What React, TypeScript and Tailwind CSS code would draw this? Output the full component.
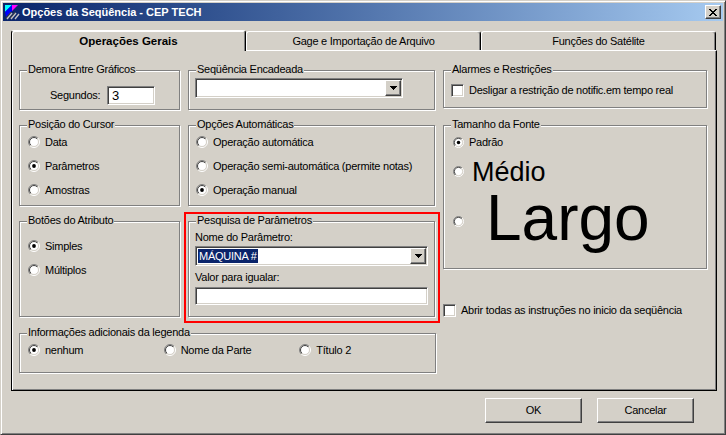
import { ReactNode } from "react";

const sunken =
  "bg-white border border-t-[#808080] border-l-[#808080] border-b-white border-r-white shadow-[inset_1px_1px_0_#404040,inset_-1px_-1px_0_#d4d0c8]";
const raised =
  "bg-[#d4d0c8] border border-t-white border-l-white border-b-[#404040] border-r-[#404040] shadow-[inset_-1px_-1px_0_#808080,inset_1px_1px_0_#d4d0c8]";

function Radio({ checked, size = 12 }: { checked?: boolean; size?: number }) {
  return (
    <svg width={size} height={size} viewBox="0 0 12 12" className="shrink-0">
      <defs>
        <linearGradient id="radio-out" x1="0" y1="0" x2="1" y2="1">
          <stop offset="0.5" stopColor="#808080" />
          <stop offset="0.5" stopColor="#ffffff" />
        </linearGradient>
        <linearGradient id="radio-in" x1="0" y1="0" x2="1" y2="1">
          <stop offset="0.5" stopColor="#404040" />
          <stop offset="0.5" stopColor="#d4d0c8" />
        </linearGradient>
      </defs>
      <circle cx="6" cy="6" r="5.5" fill="none" stroke="url(#radio-out)" />
      <circle cx="6" cy="6" r="4.5" fill="#fff" stroke="url(#radio-in)" />
      {checked && <circle cx="6" cy="6" r="1.9" fill="#000" />}
    </svg>
  );
}

function Check() {
  return <div className={`${sunken} w-[13px] h-[13px] shrink-0`} />;
}

function Arrow() {
  return (
    <svg width="7" height="4" viewBox="0 0 7 4">
      <path d="M0 0h7v1h-1v1h-1v1h-1v1h-1v-1h-1v-1h-1v-1h-1z" fill="#000" />
    </svg>
  );
}

function Combo({ className, value }: { className?: string; value?: string }) {
  return (
    <div className={`${sunken} flex items-center p-[1px] ${className ?? ""}`}>
      <div className="flex-1 flex items-center pl-[1px]">
        {value && (
          <span className="bg-[#0a246a] text-white leading-[14px] px-[1px]">{value}</span>
        )}
      </div>
      <div className={`${raised} w-[16px] h-[16px] flex items-center justify-center`}>
        <Arrow />
      </div>
    </div>
  );
}

function Group({
  label,
  className,
  children,
}: {
  label: string;
  className?: string;
  children?: ReactNode;
}) {
  return (
    <div
      className={`relative border border-[#808080] shadow-[inset_1px_1px_0_#fff,1px_1px_0_#fff] ${className ?? ""}`}
    >
      <span className="absolute -top-[8px] left-[7px] bg-[#d4d0c8] px-[1px] leading-[13px] whitespace-nowrap">
        {label}
      </span>
      {children}
    </div>
  );
}

function Option({
  label,
  checked,
  className,
}: {
  label: string;
  checked?: boolean;
  className?: string;
}) {
  return (
    <div className={`flex items-center h-[24px] gap-[5px] whitespace-nowrap ${className ?? ""}`}>
      <Radio checked={checked} />
      <span>{label}</span>
    </div>
  );
}

function AppIcon() {
  return (
    <svg width="16" height="16" viewBox="0 0 16 16" className="shrink-0">
      <path d="M1 1h7L1 8z" fill="#00ffff" />
      <path d="M8 1h6L8 7z" fill="#ff00ff" />
      <path d="M1 8l7-7v6L2 13z" fill="#0000ff" />
      <path d="M3 15l5-6M7 15l5-6M11 15l4-5" stroke="#c0c0c0" strokeWidth="1.4" />
      <path d="M2 14l5-6M6 14l5-6" stroke="#404040" strokeWidth="1" />
    </svg>
  );
}

function CloseButton() {
  return (
    <div className={`${raised} w-[16px] h-[14px] flex items-center justify-center`}>
      <svg width="8" height="7" viewBox="0 0 8 7">
        <path
          d="M0 0h2v1h1v1h2v-1h1v-1h2v1h-1v1h-1v1h-1v1h1v1h1v1h1v1h-2v-1h-1v-1h-2v1h-1v1h-2v-1h1v-1h1v-1h1v-1h-1v-1h-1v-1h-1z"
          fill="#000"
        />
      </svg>
    </div>
  );
}

function Tab({ label, active }: { label: string; active?: boolean }) {
  if (active) {
    return (
      <div className="relative z-10 w-[235px] h-[21px] -mb-[1px] bg-[#d4d0c8] rounded-tl-[3px] rounded-tr-[3px] border-l border-l-black border-t border-t-white border-r border-r-black shadow-[inset_1px_1px_0_#fff,inset_-1px_0_0_#808080] flex items-center justify-center pt-[1px] font-bold text-[11.5px] tracking-[0px]">
        {label}
      </div>
    );
  }
  return (
    <div className="w-[235px] h-[19px] bg-[#d4d0c8] rounded-tl-[3px] rounded-tr-[3px] border-l border-l-white border-t border-t-white border-r border-r-black shadow-[inset_-1px_0_0_#808080] flex items-center justify-center">
      {label}
    </div>
  );
}

function Button({ label }: { label: string }) {
  return (
    <div className={`${raised} w-[97px] h-[25px] flex items-center justify-center`}>
      {label}
    </div>
  );
}

export default function App() {
  return (
    <div className="font-['Liberation_Sans',Arial,sans-serif] text-[11px] tracking-[-0.25px] text-black w-[726px] h-[435px] bg-[#d4d0c8] border border-t-[#d4d0c8] border-l-[#d4d0c8] border-b-[#404040] border-r-[#404040] shadow-[inset_1px_1px_0_#fff,inset_-1px_-1px_0_#808080] p-[2px] flex flex-col">
      {/* title bar */}
      <div className="h-[18px] flex items-center bg-linear-to-r from-[#0a246a] to-[#a6caf0] pl-[1px] pr-[2px]">
        <AppIcon />
        <span className="ml-[2px] text-white font-bold text-[11px] tracking-[0px] leading-none">
          Opções da Seqüência - CEP TECH
        </span>
        <div className="ml-auto">
          <CloseButton />
        </div>
      </div>

      {/* tabs */}
      <div className="mt-[9px] ml-[8px] flex items-end h-[20px]">
        <Tab label="Operações Gerais" active />
        <Tab label="Gage e Importação de Arquivo" />
        <Tab label="Funções do Satélite" />
      </div>

      {/* tab panel */}
      <div className="ml-[8px] w-[706px] h-[341px] border-l border-l-black border-t border-t-white border-r border-r-black border-b border-b-black shadow-[inset_1px_0_0_#fff,inset_-1px_-1px_0_#808080] pl-[7px] pt-[19px] flex gap-[8px]">
        {/* left block */}
        <div className="w-[416px] flex flex-col">
          <div className="flex gap-[8px] h-[40px]">
            <Group label="Demora Entre Gráficos" className="w-[161px] h-full">
              <div className="flex items-center pl-[30px] pt-[15px]">
                <span className="w-[57px]">Segundos:</span>
                <div className={`${sunken} w-[48px] h-[19px] flex items-center pl-[4px] text-[13px]`}>3</div>
              </div>
            </Group>
            <Group label="Seqüência Encadeada" className="w-[247px] h-full">
              <div className="pl-[6px] pt-[7px]">
                <Combo className="w-[208px] h-[20px]" />
              </div>
            </Group>
          </div>

          <div className="flex gap-[8px] h-[81px] mt-[15px]">
            <Group label="Posição do Cursor" className="w-[161px] h-full pt-[4px] pl-[8px]">
              <Option label="Data" />
              <Option label="Parâmetros" checked />
              <Option label="Amostras" />
            </Group>
            <Group label="Opções Automáticas" className="w-[247px] h-full pt-[4px] pl-[7px]">
              <Option label="Operação automática" />
              <Option label="Operação semi-automática (permite notas)" />
              <Option label="Operação manual" checked />
            </Group>
          </div>

          <div className="flex gap-[8px] h-[96px] mt-[15px]">
            <Group label="Botões do Atributo" className="w-[161px] h-full pt-[12px] pl-[8px]">
              <Option label="Simples" checked />
              <Option label="Múltiplos" />
            </Group>
            <div className="relative w-[247px] h-full">
              <Group label="Pesquisa de Parâmetros" className="w-full h-full pl-[6px] pt-[9px]">
                <div className="leading-[13px]">Nome do Parâmetro:</div>
                <Combo className="w-[233px] h-[20px] mt-[2px]" value="MÁQUINA #" />
                <div className="leading-[13px] mt-[5px]">Valor para igualar:</div>
                <div className={`${sunken} w-[233px] h-[18px] mt-[3px]`} />
              </Group>
              {/* red highlight annotation */}
              <div className="absolute -left-[4px] -top-[9px] w-[256px] h-[111px] border-2 border-[#ff0000] pointer-events-none" />
            </div>
          </div>

          <Group label="Informações adicionais da legenda" className="w-[417px] h-[40px] mt-[16px] pt-[4px] pl-[8px] flex">
            <Option label="nenhum" checked className="w-[136px]" />
            <Option label="Nome da Parte" className="w-[136px]" />
            <Option label="Título 2" className="w-[136px]" />
          </Group>
        </div>

        {/* right column */}
        <div className="w-[264px] flex flex-col">
          <Group label="Alarmes e Restrições" className="h-[38px] pl-[7px] pt-[11px]">
            <div className="flex items-center gap-[5px] whitespace-nowrap">
              <Check />
              <span>Desligar a restrição de notific.em tempo real</span>
            </div>
          </Group>

          <Group label="Tamanho da Fonte" className="h-[144px] mt-[17px] pl-[9px] pt-[4px] flex flex-col">
            <div className="flex items-center h-[24px] gap-[5px]">
              <Radio checked size={11} />
              <span>Padrão</span>
            </div>
            <div className="flex items-start h-[34px]">
              <div className="mt-[12px]">
                <Radio size={11} />
              </div>
              <span className="ml-[8px] mt-[1px] text-[27px] leading-[34px] tracking-[0px]">Médio</span>
            </div>
            <div className="flex items-start h-[67px]">
              <div className="mt-[28px]">
                <Radio size={11} />
              </div>
              <span className="ml-[22px] text-[64px] leading-[60px] tracking-[0px]">Largo</span>
            </div>
          </Group>

          <div className="mt-[35px] flex items-center gap-[5px] whitespace-nowrap h-[13px]">
            <Check />
            <span>Abrir todas as instruções no inicio da seqüência</span>
          </div>
        </div>
      </div>

      {/* buttons */}
      <div className="mt-[7px] flex justify-end gap-[15px] pr-[29px]">
        <Button label="OK" />
        <Button label="Cancelar" />
      </div>
    </div>
  );
}
